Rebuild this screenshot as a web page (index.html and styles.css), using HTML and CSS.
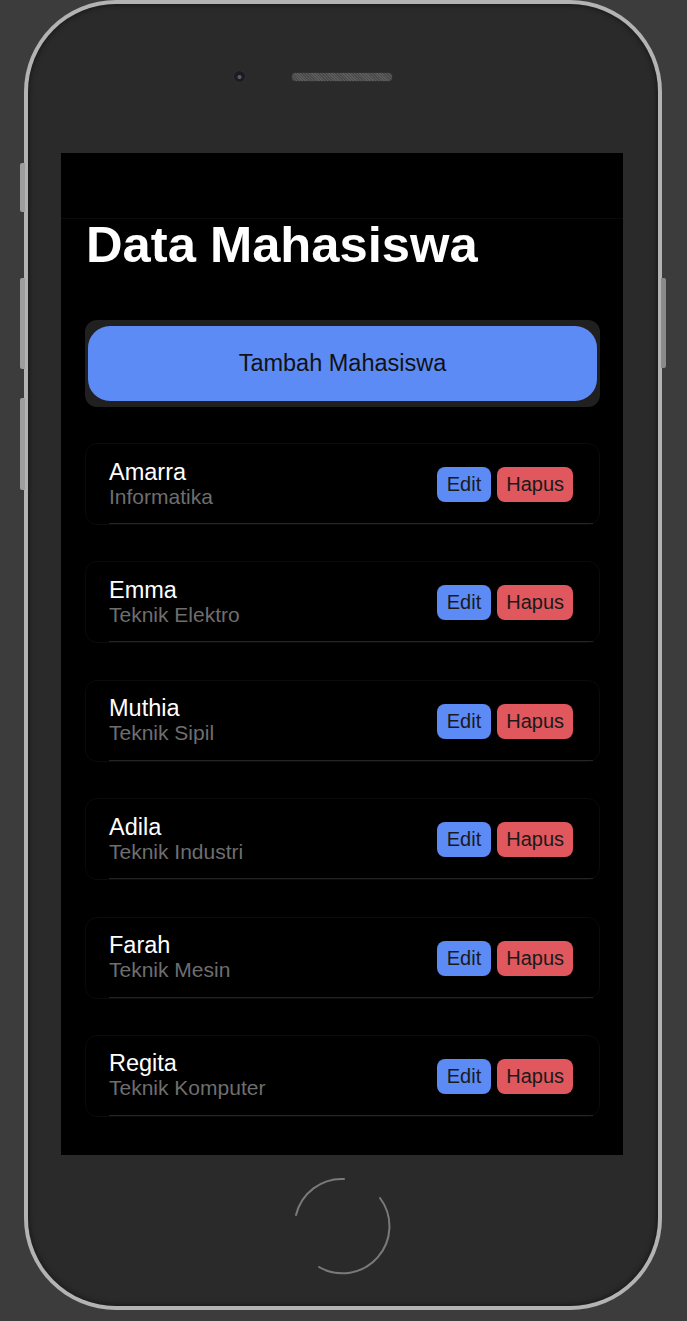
FILE: index.html
```html
<!DOCTYPE html>
<html lang="id">
<head>
<meta charset="utf-8">
<title>Data Mahasiswa</title>
<link rel="stylesheet" href="styles.css">
</head>
<body>
<div class="phone">
  <span class="side side-l1"></span>
  <span class="side side-l2"></span>
  <span class="side side-l3"></span>
  <span class="side side-r1"></span>
  <div class="body">
    <div class="bezel-top">
      <span class="camera"></span>
      <span class="speaker"></span>
      <span class="ghost"></span>
    </div>
    <div class="screen">
      <div class="toolbar"></div>
      <div class="content">
        <h1 class="title">Data Mahasiswa</h1>
        <div class="add-wrap">
          <button class="add-btn">Tambah Mahasiswa</button>
        </div>
        <ul class="list">
          <li class="card"><div class="row"><div class="info"><div class="name">Amarra</div><div class="major">Informatika</div></div><div class="actions"><button class="btn edit">Edit</button><button class="btn del">Hapus</button></div></div></li>
          <li class="card"><div class="row"><div class="info"><div class="name">Emma</div><div class="major">Teknik Elektro</div></div><div class="actions"><button class="btn edit">Edit</button><button class="btn del">Hapus</button></div></div></li>
          <li class="card"><div class="row"><div class="info"><div class="name">Muthia</div><div class="major">Teknik Sipil</div></div><div class="actions"><button class="btn edit">Edit</button><button class="btn del">Hapus</button></div></div></li>
          <li class="card"><div class="row"><div class="info"><div class="name">Adila</div><div class="major">Teknik Industri</div></div><div class="actions"><button class="btn edit">Edit</button><button class="btn del">Hapus</button></div></div></li>
          <li class="card"><div class="row"><div class="info"><div class="name">Farah</div><div class="major">Teknik Mesin</div></div><div class="actions"><button class="btn edit">Edit</button><button class="btn del">Hapus</button></div></div></li>
          <li class="card"><div class="row"><div class="info"><div class="name">Regita</div><div class="major">Teknik Komputer</div></div><div class="actions"><button class="btn edit">Edit</button><button class="btn del">Hapus</button></div></div></li>
        </ul>
      </div>
    </div>
    <div class="bezel-bottom">
      <svg class="home" width="110" height="110" viewBox="0 0 110 110">
        <path d="M9 44 A47 47 0 0 1 57 8" fill="none" stroke="#7a7a7a" stroke-width="2" stroke-linecap="round"/>
        <path d="M93 27 A47 47 0 0 1 32 96" fill="none" stroke="#7a7a7a" stroke-width="2" stroke-linecap="round"/>
      </svg>
    </div>
  </div>
</div>
</body>
</html>
```
FILE: styles.css
```css
* { box-sizing: border-box; }
html, body { margin: 0; padding: 0; }
body {
  background: #3c3c3c;
  width: 687px;
  height: 1321px;
  overflow: hidden;
  font-family: "Liberation Sans", Arial, sans-serif;
}
.phone {
  position: relative;
  margin-left: 24px;
  width: 638px;
  height: 1310px;
  background: #b3b3b3;
  border-radius: 92px;
  padding: 4px;
}
.side {
  position: absolute;
  width: 5px;
  background: #9e9e9e;
  border-radius: 2px 0 0 2px;
}
.side-l1 { left: -4px; top: 163px; height: 49px; }
.side-l2 { left: -4px; top: 278px; height: 91px; }
.side-l3 { left: -4px; top: 398px; height: 92px; }
.side-r1 { right: -4px; top: 278px; height: 90px; border-radius: 0 2px 2px 0; background: #8a8a8a; }
.body {
  height: 100%;
  background: #2a2a2a;
  border-radius: 88px;
  box-shadow: inset 0 0 6px rgba(0,0,0,0.6);
  padding: 0 35px 0 33px;
  display: flex;
  flex-direction: column;
}
.bezel-top {
  height: 149px;
  display: flex;
  justify-content: center;
  align-items: center;
  gap: 47px;
  padding-bottom: 4px;
}
.camera {
  width: 11px;
  height: 11px;
  border-radius: 50%;
  background: radial-gradient(circle at 50% 55%, #5a5a62 0 1.5px, #1c1c22 2.5px, #1a1a1f 100%);
  box-shadow: 0 0 1px #555;
}
.speaker {
  width: 100px;
  height: 8px;
  border-radius: 4px;
  background: repeating-linear-gradient(45deg, #4a4a4a 0 1px, #5c5c5c 1px 2px);
  box-shadow: 0 0 1px #666;
}
.ghost { width: 11px; height: 11px; }
.screen {
  height: 1002px;
  background: #000;
  display: flex;
  flex-direction: column;
}
.toolbar {
  height: 66px;
  border-bottom: 1px solid #0a0a0a;
  flex: none;
}
.content {
  padding: 0 23px 0 24px;
}
.title {
  margin: 0 0 49px 1px;
  color: #fff;
  font-size: 50.7px;
  line-height: 52px;
  font-weight: 700;
}
.add-wrap {
  background: #202020;
  border-radius: 12px;
  padding: 6px 3px;
  margin-bottom: 36px;
}
.add-btn {
  display: block;
  width: 100%;
  height: 75px;
  border: none;
  border-radius: 22px;
  background: #5d8bf6;
  color: #121212;
  font-family: "Liberation Sans", Arial, sans-serif;
  font-size: 23.5px;
  padding: 0;
}
.list {
  list-style: none;
  margin: 0;
  padding: 0;
}
.card {
  height: 82px;
  border: 1px solid #0b0b0b;
  border-radius: 12px;
  padding-left: 23px;
  padding-right: 6px;
  margin-bottom: 36.4px;
  display: flex;
}
.row {
  flex: 1;
  display: flex;
  align-items: center;
  justify-content: space-between;
  border-bottom: 1px solid #242424;
  padding-right: 20px;
}
.info { padding-top: 1px; }
.name {
  color: #fff;
  font-size: 23.5px;
  line-height: 25px;
}
.major {
  color: #6e6e6e;
  font-size: 21px;
  line-height: 24px;
}
.actions {
  display: flex;
  gap: 6px;
  padding-top: 2px;
}
.btn {
  height: 35px;
  border: none;
  border-radius: 8px;
  padding: 0 9px;
  font-family: "Liberation Sans", Arial, sans-serif;
  font-size: 20px;
  color: #1a1a1a;
}
.edit { background: #5d8bf6; padding: 0 10px; }
.del { background: #e0575d; }
.bezel-bottom {
  flex: 1;
  display: flex;
  justify-content: center;
  align-items: flex-start;
  padding-top: 16px;
}
.home { display: block; }
```
